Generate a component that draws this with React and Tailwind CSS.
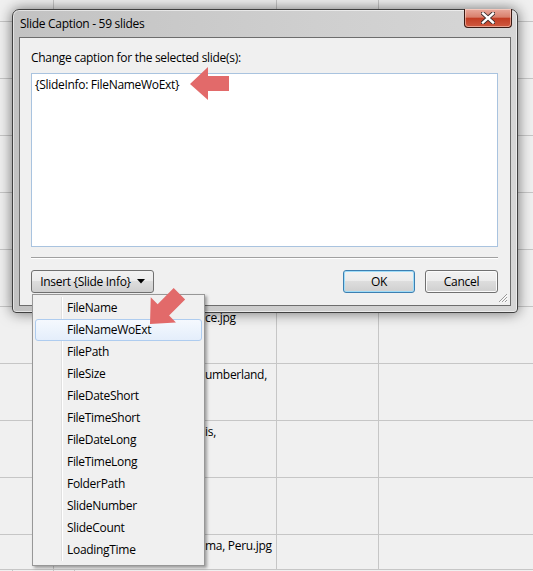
import React from "react";

const rows = [
  { h: "h-[22px]", text: "" },
  { h: "h-[57px]", text: "" },
  { h: "h-[57px]", text: "" },
  { h: "h-[57px]", text: "" },
  { h: "h-[57px]", text: "" },
  { h: "h-[57px]", text: "" },
  { h: "h-[57px]", text: "ce.jpg" },
  { h: "h-[57px]", text: "umberland," },
  { h: "h-[57px]", text: "is," },
  { h: "h-[57px]", text: "" },
  { h: "h-[35px]", text: "ma, Peru.jpg" },
];

const menuItems = [
  "FileName",
  "FileNameWoExt",
  "FilePath",
  "FileSize",
  "FileDateShort",
  "FileTimeShort",
  "FileDateLong",
  "FileTimeLong",
  "FolderPath",
  "SlideNumber",
  "SlideCount",
  "LoadingTime",
];

const btn =
  "h-[23px] rounded-[3px] border bg-[linear-gradient(#f2f2f2_0%,#ebebeb_50%,#dddddd_50%,#cfcfcf_100%)] text-[12px] text-black flex items-center justify-center";

const Arrow = () => (
  <polygon points="2,18 20,1 20,10 41,10 41,25 20,25 20,34" fill="#e26a6a" />
);

const App = () => (
  <div className="relative w-[533px] h-[571px] overflow-hidden bg-[#f0f0f0] font-['Segoe_UI','Open_Sans',sans-serif] text-[12px] tracking-[-0.3px] text-black">
    {/* spreadsheet behind the dialog */}
    <div className="flex flex-col">
      {rows.map((r, i) => (
        <div
          key={i}
          className={`${r.h} grid grid-cols-[54px_223px_102px_1fr] border-b border-[#c6c6c6]`}
        >
          <div className="border-r border-[#c6c6c6]" />
          <div className="border-r border-[#c6c6c6] pl-[151px] pt-[3px] leading-[16px]">
            {r.text}
          </div>
          <div className="border-r border-[#c6c6c6]" />
          <div />
        </div>
      ))}
      <div className="h-[2px] grid grid-cols-[13px_41px_21px_1fr]">
        <div className="border-r border-[#c6c6c6]" />
        <div className="border-r border-[#c6c6c6]" />
        <div className="border-r border-[#c6c6c6]" />
        <div />
      </div>
    </div>

    {/* dialog window */}
    <div className="absolute left-[12px] top-[9px] w-[506px] h-[304px] flex flex-col rounded-t-[7px] rounded-b-[4px] border border-[#404040] bg-[linear-gradient(90deg,#c2c2c2,#cfcfcf_60%,#d6d6d6)] shadow-[0_0_14px_rgba(0,0,0,0.55),inset_0_0_0_1px_rgba(255,255,255,0.55)]">
      <div className="relative h-[27px] flex items-center pl-[7px]">
        <span>Slide Caption - 59 slides</span>
        <div className="absolute right-[5px] top-[-1px] w-[48px] h-[19px] rounded-b-[4px] border border-[#3a1a14] border-t-0 bg-[linear-gradient(#e9a99c_0%,#d9806d_45%,#c23d24_52%,#cf5a40_100%)] shadow-[inset_0_0_0_1px_rgba(255,230,220,0.5)] flex items-center justify-center">
          <svg width="14" height="12" viewBox="0 0 14 12">
            <path d="M2,1.5 L12,10.5 M12,1.5 L2,10.5" stroke="#3a2a2a" strokeWidth="4.2" strokeLinecap="square" />
            <path d="M2,1.5 L12,10.5 M12,1.5 L2,10.5" stroke="#ffffff" strokeWidth="2.4" strokeLinecap="square" />
          </svg>
        </div>
      </div>

      <div className="relative mx-[6px] mb-[6px] flex-1 flex flex-col border border-[#6d6d6d] bg-[#f0f0f0] pt-[12px] pl-[11px] pr-[12px]">
        <div className="h-[16px] leading-[16px]">Change caption for the selected slide(s):</div>
        <div className="mt-[7px] h-[174px] border border-[#a9c3df] bg-white px-[3px] pt-[3px] leading-[16px]">
          {"{SlideInfo: FileNameWoExt}"}
        </div>
        <div className="mt-[10px] h-[2px] border-t border-[#a0a0a0] border-b border-b-white" />
        <div className="mt-[11px] flex items-center">
          <div className={`${btn} w-[123px] border-[#707070] gap-[6px]`}>
            <span>Insert {"{Slide Info}"}</span>
            <svg width="8" height="5" viewBox="0 0 8 5">
              <path d="M0,0 L8,0 L4,4.5 Z" fill="#000" />
            </svg>
          </div>
          <div className="flex-1" />
          <div className={`${btn} w-[72px] border-[#3c7fb1] shadow-[inset_0_0_0_1px_#9fdcf8]`}>OK</div>
          <div className={`${btn} ml-[10px] w-[73px] border-[#707070] shadow-[inset_0_0_0_1px_#fbfbfb]`}>Cancel</div>
        </div>
        <svg className="absolute right-[2px] bottom-[2px]" width="11" height="11" viewBox="0 0 11 11">
          <path d="M10,2 L2,10 M10,5 L5,10 M10,8 L8,10" stroke="#9a9a9a" strokeWidth="1" />
          <path d="M10.5,3 L3,10.5 M10.5,6 L6,10.5 M10.5,9 L9,10.5" stroke="#ffffff" strokeWidth="1" />
        </svg>
      </div>
    </div>

    {/* dropdown menu */}
    <div className="absolute left-[32px] top-[294px] w-[173px] border border-[#979797] bg-[#f0f0f0] shadow-[2px_2px_3px_rgba(0,0,0,0.35)] pt-[2px] pb-[4px] px-[2px]">
      <div className="absolute left-[28px] top-[2px] bottom-[4px] w-[2px] border-l border-[#e0e0e0] border-r border-r-white" />
      {menuItems.map((item, i) => (
        <div
          key={item}
          className={`relative h-[22px] flex items-center pl-[31px] rounded-[3px] border ${
            i === 1
              ? "border-[#aeccef] bg-[linear-gradient(#f5f9fe,#e4eefb)]"
              : "border-transparent"
          }`}
        >
          {item}
        </div>
      ))}
    </div>

    {/* red pointer arrows */}
    <svg className="absolute left-[188px] top-[66px]" width="42" height="35" viewBox="0 0 42 35">
      <Arrow />
    </svg>
    <svg className="absolute left-[140px] top-[276px]" width="54" height="54" viewBox="0 0 54 54">
      <g transform="translate(10,48) rotate(-45) scale(1.08) translate(-2,-18)">
        <Arrow />
      </g>
    </svg>
  </div>
);

export default App;
